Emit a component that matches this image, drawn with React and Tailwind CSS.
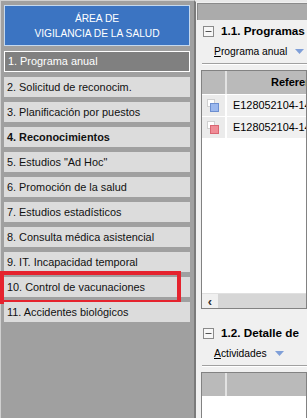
import React from "react";

const items = [
    { label: "2. Solicitud de reconocim." },
    { label: "3. Planificación por puestos" },
    { label: "4. Reconocimientos", bold: true },
    { label: '5. Estudios "Ad Hoc"' },
    { label: "6. Promoción de la salud" },
    { label: "7. Estudios estadísticos" },
    { label: "8. Consulta médica asistencial" },
    { label: "9. IT. Incapacidad temporal" },
    { label: "10. Control de vacunaciones", marked: true },
    { label: "11. Accidentes biológicos" },
];

function CollapseBox() {
    return (
        <svg width="11" height="11" viewBox="0 0 11 11" className="shrink-0">
            <rect x="0.5" y="0.5" width="10" height="10" fill="#f7f7f7" stroke="#8a8a8a" />
            <line x1="2.5" y1="5.5" x2="8.5" y2="5.5" stroke="#555" />
        </svg>
    );
}

function DropArrow() {
    return (
        <svg width="9" height="6" viewBox="0 0 9 6" className="shrink-0">
            <path d="M0 0 H9 L4.5 5 Z" fill="#7f9fd8" />
        </svg>
    );
}

function RowIcon({ fill, stroke }) {
    return (
        <svg width="13" height="14" viewBox="0 0 13 14">
            <rect x="0.5" y="0.5" width="7" height="7" fill="#ffffff" stroke="#d0d0d0" />
            <rect x="3.5" y="4.5" width="8" height="8" fill={fill} stroke={stroke} />
        </svg>
    );
}

function Section({ title, tool, underline, gridH, children }) {
    return (
        <div className="flex flex-col shrink-0">
            <div className="flex items-center gap-[7px] pl-[7px] h-[22px]">
                <CollapseBox />
                <span className="text-[11.7px] font-bold text-black whitespace-nowrap">{title}</span>
            </div>
            <div className="flex items-center gap-[8px] pl-[18px] h-[20px] text-[10.3px] text-black whitespace-nowrap">
                <span><span className="underline">{underline}</span>{tool}</span>
                <DropArrow />
            </div>
            <div className="ml-[6px] mt-[1px] border-t border-[#a0a0a0] border-b border-b-white" />
            <div className={`ml-[5px] mt-[5px] bg-white border border-[#828282] flex flex-col overflow-hidden ${gridH}`}>
                {children}
            </div>
        </div>
    );
}

function GridHeader({ label }) {
    return (
        <div className="flex shrink-0 h-[24px] bg-[#bababa] border-b border-white">
            <div className="w-[25px] shrink-0 border-r-2 border-[#e2e2e2]" />
            <div className="flex-1 pl-[44px] flex items-center text-[11px] font-bold text-black whitespace-nowrap overflow-hidden">
                {label}
            </div>
        </div>
    );
}

export default function App() {
    return (
        <div className="w-[307px] h-[418px] flex overflow-hidden bg-[#a0a0a0] font-['Liberation_Sans',Arial,sans-serif]">
            <div className="w-[194px] shrink-0 bg-[#a0a0a0] border-l border-t border-[#d0d0d0] pl-[3px] pt-[4px] flex flex-col gap-[5px]">
                <div className="w-[186px] h-[41px] bg-[#3b74c2] border border-[#c4d8ee] text-white text-center text-[10.2px] leading-[15px] flex flex-col justify-center">
                    <span>ÁREA DE</span>
                    <span>VIGILANCIA DE LA SALUD</span>
                </div>
                <div className="w-[186px] h-[21px] bg-[#808080] border border-white text-white text-[10.9px] pl-[3px] flex items-center">
                    1. Programa anual
                </div>
                {items.map((it) => (
                    <div
                        key={it.label}
                        className={`relative w-[186px] h-[20px] bg-[#dcdcdc] text-[#111] text-[10.9px] pl-[3px] flex items-center whitespace-nowrap ${it.bold ? "font-bold" : ""}`}
                    >
                        {it.label}
                        {it.marked && (
                            <span className="absolute -left-[4px] -top-[6px] w-[181px] h-[33px] border-[4px] border-[#e5232e]" />
                        )}
                    </div>
                ))}
            </div>

            <div className="flex-1 min-w-0 flex flex-col bg-[#f0f0f0] border-l-2 border-[#7a7a7a] border-t-2 border-t-[#e8e8e8]">
                <div className="shrink-0 h-[17px] mt-[1px] ml-[1px] bg-[#ababab] border-l border-t border-[#8a8a8a]" />
                <Section title="1.1. Programas" underline="P" tool="rograma anual" gridH="h-[239px]">
                    <GridHeader label="Referencia" />
                    {[
                        { fill: "#9bb8ee", stroke: "#6d8fd0" },
                        { fill: "#f08c96", stroke: "#d86672" },
                    ].map((r, i) => (
                        <div key={i} className="flex shrink-0 h-[22px] border-b border-white">
                            <div className="w-[25px] shrink-0 bg-[#ebebeb] border-r-2 border-white flex items-center justify-center">
                                <RowIcon fill={r.fill} stroke={r.stroke} />
                            </div>
                            <div className="flex-1 bg-[#f0f0f0] pl-[6px] flex items-center text-[10.9px] text-black whitespace-nowrap overflow-hidden">
                                E128052104-14
                            </div>
                        </div>
                    ))}
                    <div className="flex-1" />
                    <div className="shrink-0 h-[15px] flex items-center bg-[#f0f0f0] border-t border-[#e0e0e0]">
                        <span className="w-[16px] shrink-0 text-center text-[13px] font-bold text-[#333] leading-none">‹</span>
                        <div className="flex-1 h-full bg-[#d6d6d6]" />
                    </div>
                </Section>
                <div className="h-[13px] shrink-0" />
                <Section title="1.2. Detalle de" underline="A" tool="ctividades" gridH="h-[60px]">
                    <GridHeader label="" />
                </Section>
            </div>
        </div>
    );
}
